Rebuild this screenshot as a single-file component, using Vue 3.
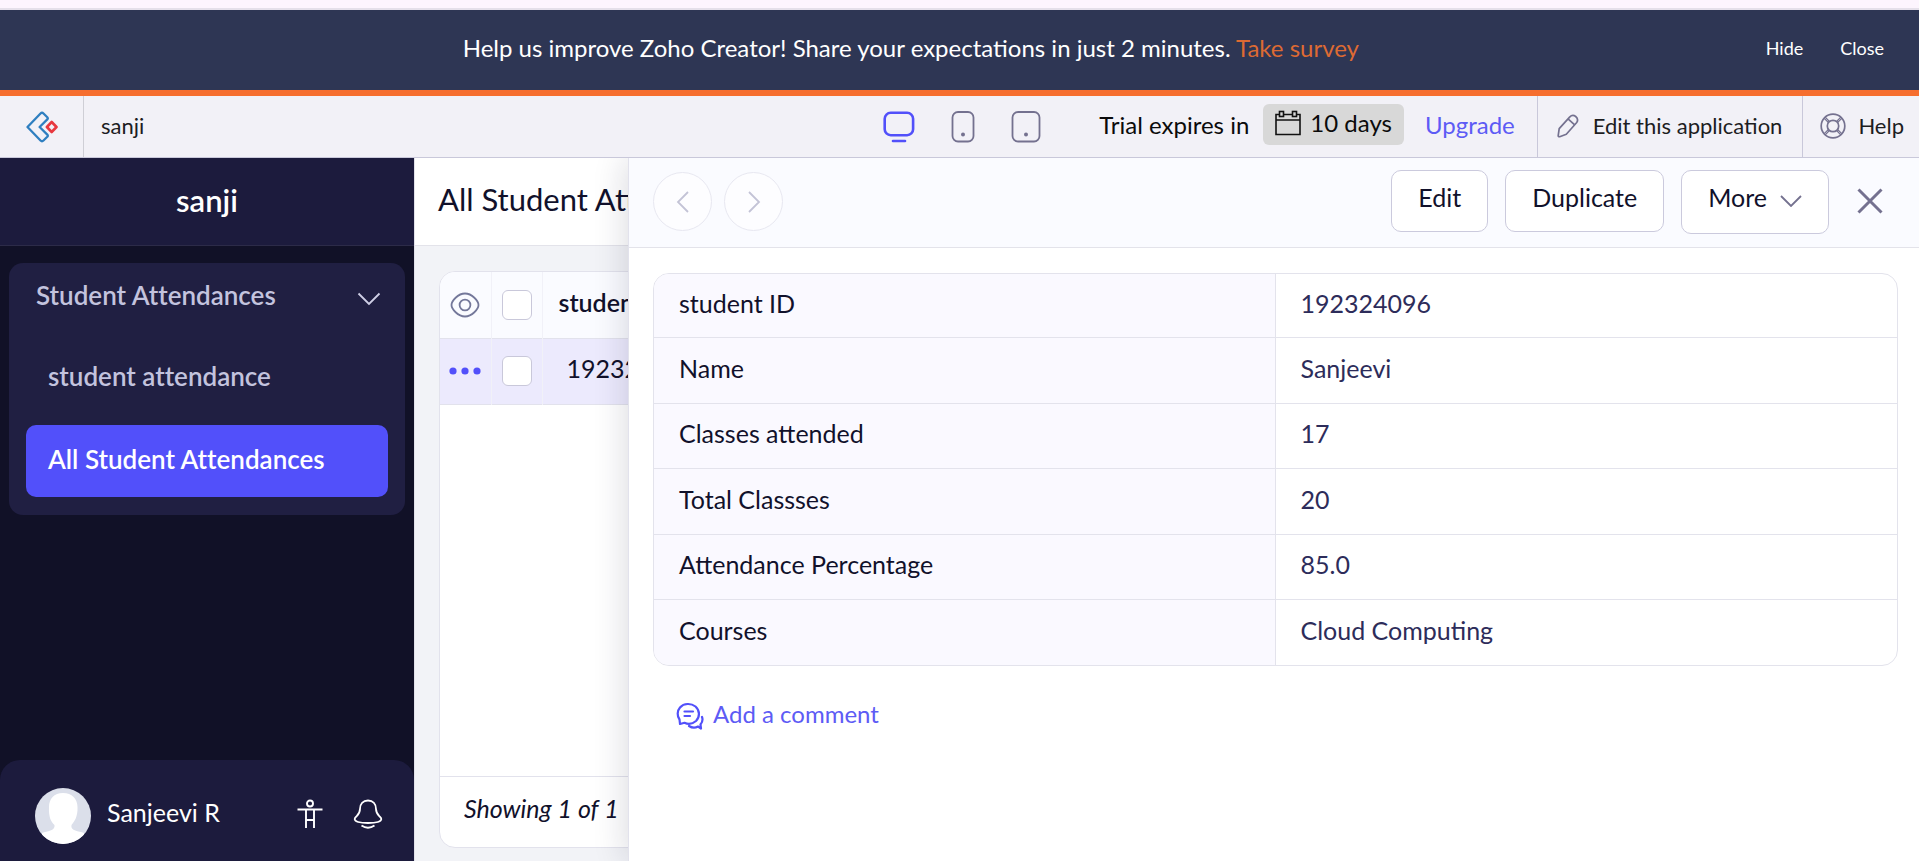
<script setup>
import { ref } from 'vue'

const fields = [
  { label: 'student ID', value: '192324096' },
  { label: 'Name', value: 'Sanjeevi' },
  { label: 'Classes attended', value: '17' },
  { label: 'Total Classses', value: '20' },
  { label: 'Attendance Percentage', value: '85.0' },
  { label: 'Courses', value: 'Cloud Computing' },
]
const allSelected = ref(false)
const rowSelected = ref(false)
</script>

<template>
  <div class="app">
    <div class="strip"></div>
    <aside class="banner" aria-label="Survey">
      <p class="banner-text">
        Help us improve Zoho Creator! Share your expectations in just 2 minutes.
        <a href="#" class="survey">Take survey</a>
      </p>
      <div class="banner-actions">
        <button type="button">Hide</button>
        <button type="button">Close</button>
      </div>
    </aside>

    <header class="topbar">
      <a href="#" class="brand" aria-label="Creator home">
        <svg width="32" height="32" viewBox="0 0 32 32" fill="none" stroke-width="2.300" stroke-linejoin="round">
          <path stroke="#2f7fc0" d="M14.500 2.500Q16 1 17.500 2.500L21.300 6.200Q22.300 7.300 21.300 8.400L13.600 16L21.300 23.600Q22.300 24.700 21.300 25.800L17.500 29.500Q16 31 14.500 29.500L1.500 16Z" />
          <path stroke="#e8383f" stroke-width="2.600" d="M25.700 11L30.500 16L25.700 21L20.900 16Z" />
        </svg>
      </a>
      <span class="app-name">sanji</span>
      <div class="devices">
        <button type="button" aria-label="Desktop">
          <svg width="32" height="32" viewBox="0 0 32 32" fill="none" stroke="#5250fa" stroke-width="2.600" stroke-linecap="round">
            <rect x="1.700" y="1.800" width="28.400" height="22.400" rx="6" />
            <path d="M10 30H22" />
          </svg>
        </button>
        <button type="button" aria-label="Phone">
          <svg width="24" height="32" viewBox="0 0 24 32" fill="none" stroke="#74718f" stroke-width="1.800">
            <rect x="1.500" y="1" width="21" height="29.500" rx="5.500" />
            <circle cx="12" cy="23.500" r="2" fill="#74718f" stroke="none" />
          </svg>
        </button>
        <button type="button" aria-label="Tablet">
          <svg width="30" height="32" viewBox="0 0 30 32" fill="none" stroke="#74718f" stroke-width="1.800">
            <rect x="1.500" y="1" width="27" height="29.500" rx="5.500" />
            <circle cx="15" cy="23.500" r="2" fill="#74718f" stroke="none" />
          </svg>
        </button>
      </div>
      <div class="trial">
        <span>Trial expires in</span>
        <span class="badge">
          <svg width="26" height="26" viewBox="0 0 26 26" fill="none" stroke="#111" stroke-width="1.600">
            <path d="M4 4.500H1V24.500H25V4.500H22M9 4.500H17M1 10H25" />
            <rect x="4.500" y="1.500" width="4" height="5" />
            <rect x="17.500" y="1.500" width="4" height="5" />
          </svg>
          10 days
        </span>
        <a href="#" class="upgrade">Upgrade</a>
      </div>
      <a href="#" class="tool edit-app">
        <svg width="22" height="24" viewBox="0 0 22 24" fill="none" stroke="#74718f" stroke-width="1.700" stroke-linejoin="round">
          <path d="M2.200 14.600L12.600 3.100Q15.500 .2 18.700 2.500Q22 5.300 19.500 8.800L9.300 20.300L2.700 22.700Q1.300 23 1.200 21.600Z" />
          <path d="M11 4.900L17.700 10.800" />
        </svg>
        Edit this application
      </a>
      <a href="#" class="tool help">
        <svg width="26" height="26" viewBox="0 0 26 26" fill="none" stroke="#74718f" stroke-width="1.700">
          <circle cx="13" cy="13" r="11.800" />
          <circle cx="13" cy="13" r="5.700" />
          <path d="M5.200 4.200L9.500 8.500M4.200 5.300L8.400 9.500M20.800 4.200L16.500 8.500M21.800 5.300L17.600 9.500M5.200 21.800L9.500 17.500M4.200 20.700L8.400 16.500M20.800 21.800L16.500 17.500M21.800 20.700L17.600 16.500" stroke-width="1.100" />
        </svg>
        Help
      </a>
    </header>

    <div class="body">
      <nav class="sidebar" aria-label="Application">
        <h1>sanji</h1>
        <div class="group">
          <button type="button" class="group-head">
            Student Attendances
            <svg width="24" height="14" viewBox="0 0 24 14" fill="none" stroke="#cfcfe6" stroke-width="1.800"><path d="M1.500 1.500L12 12L22.500 1.500" /></svg>
          </button>
          <a href="#" class="item">student attendance</a>
          <a href="#" class="item active" aria-current="page">All Student Attendances</a>
        </div>
        <div class="user">
          <svg class="avatar" width="56" height="56" viewBox="0 0 56 56">
            <clipPath id="avatar-clip"><circle cx="28" cy="28" r="28" /></clipPath>
            <g clip-path="url(#avatar-clip)">
              <rect width="56" height="56" fill="#dbdfea" />
              <path fill="#fff" d="M28 5C37 5 42.500 11 42.500 19C43 29 39 34 36.500 37C35 43 44 43 49 45V56H7V45C12 43 20.500 43 19.500 37C16 34 13.500 29 14 19C14 11 19 5 28 5Z" />
            </g>
          </svg>
          <span class="user-name">Sanjeevi R</span>
          <button type="button" aria-label="Accessibility">
            <svg width="26" height="30" viewBox="0 0 26 30" fill="none" stroke="#fff" stroke-width="1.900">
              <circle cx="13" cy="4.500" r="3" />
              <path d="M.5 10.500H25.500M9 10.500V29M17 10.500V29M9 21H17" />
            </svg>
          </button>
          <button type="button" aria-label="Notifications">
            <svg width="30" height="30" viewBox="0 0 30 30" fill="none" stroke="#fff" stroke-width="1.800">
              <path d="M15 1.500C20 1.500 23 5 23 10C23 15 25.500 16 28 19C30 23 22 24 15 24C8 24 0 23 2 19C4.500 16 7 15 7 10C7 5 10 1.500 15 1.500Z" />
              <path d="M8.500 26.500Q15 31 21.500 26.500" />
            </svg>
          </button>
        </div>
      </nav>

      <main class="report">
        <h2>All Student Attendances</h2>
        <div class="card">
          <table class="list">
            <thead>
              <tr>
                <th class="tight">
                  <svg width="30" height="26" viewBox="0 0 30 26" fill="none" stroke="#74789a" stroke-width="1.800">
                    <path d="M15 1.500C22 1.500 28.500 9 28.500 13C28.500 17 22 24.500 15 24.500C8 24.500 1.500 17 1.500 13C1.500 9 8 1.500 15 1.500Z" />
                    <circle cx="15" cy="13" r="5.400" />
                  </svg>
                </th>
                <th class="tight"><input v-model="allSelected" type="checkbox" aria-label="Select all" /></th>
                <th class="data">student ID</th>
              </tr>
            </thead>
            <tbody>
              <tr>
                <td class="tight">
                  <button type="button" aria-label="Record actions">
                    <svg width="32" height="8" viewBox="0 0 32 8" fill="#5250fa"><circle cx="4" cy="4" r="3.600" /><circle cx="16" cy="4" r="3.600" /><circle cx="28" cy="4" r="3.600" /></svg>
                  </button>
                </td>
                <td class="tight"><input v-model="rowSelected" type="checkbox" aria-label="Select record" /></td>
                <td class="data">192324096</td>
              </tr>
            </tbody>
          </table>
          <p class="count">Showing 1 of 1</p>
        </div>
      </main>

      <section class="drawer" aria-label="Record">
        <div class="drawer-head">
          <button type="button" class="round" aria-label="Previous" disabled>
            <svg width="14" height="24" viewBox="0 0 14 24" fill="none" stroke="#c3c3d6" stroke-width="1.800"><path d="M12 2L2 12L12 22" /></svg>
          </button>
          <button type="button" class="round" aria-label="Next" disabled>
            <svg width="14" height="24" viewBox="0 0 14 24" fill="none" stroke="#c3c3d6" stroke-width="1.800"><path d="M2 2L12 12L2 22" /></svg>
          </button>
          <div class="actions">
            <button type="button" class="btn">Edit</button>
            <button type="button" class="btn">Duplicate</button>
            <button type="button" class="btn more">
              More
              <svg width="22" height="12" viewBox="0 0 22 12" fill="none" stroke="#74718f" stroke-width="1.800"><path d="M1 1L11 11L21 1" /></svg>
            </button>
            <button type="button" class="close" aria-label="Close record">
              <svg width="26" height="26" viewBox="0 0 26 26" fill="none" stroke="#74718f" stroke-width="3"><path d="M1.500 1.500L24.500 24.500M24.500 1.500L1.500 24.500" /></svg>
            </button>
          </div>
        </div>
        <table class="record">
          <tbody>
            <tr v-for="f in fields" :key="f.label">
              <th scope="row">{{ f.label }}</th>
              <td>{{ f.value }}</td>
            </tr>
          </tbody>
        </table>
        <button type="button" class="comment">
          <svg width="28" height="28" viewBox="0 0 28 28" fill="none" stroke="#5250fa" stroke-width="2.200" stroke-linejoin="round" stroke-linecap="round">
            <path d="M4 22L3.500 17.500C1 14 1 9 4 5.500C8 1 15 1 19.500 4.500C24 8.500 24 15 20 19C16.500 22 12 22.500 8.500 20.800Z" />
            <path d="M8.500 9.500H17M8.500 14H14" />
            <path d="M13 24C16 26 19.500 26 22 24.500L25 26.500L24.500 22.500C26.500 20 27 17.500 26 15" />
          </svg>
          Add a comment
        </button>
      </section>
    </div>
  </div>
</template>

<style>
html,
body,
#app {
  height: 100%;
}
</style>

<style scoped>
.app {
  display: flex;
  flex-direction: column;
  min-height: 100%;
  overflow: hidden;
  font-family: Lato, "Liberation Sans", sans-serif;
  font-size: 25px;
  line-height: 32px;
  color: #11112b;
}
.app *,
.app *::before {
  box-sizing: border-box;
}
button {
  padding: 0;
  border: 0;
  background: none;
  font: inherit;
  color: inherit;
  display: flex;
  align-items: center;
  justify-content: center;
}
a {
  color: inherit;
  text-decoration: none;
}
svg {
  display: block;
  flex: none;
}
h1,
h2,
p {
  margin: 0;
  font-weight: 400;
}
.strip {
  height: 10px;
  background: #fdf5fe;
  border-bottom: 2px solid #e5e0ea;
}
.banner {
  display: flex;
  align-items: center;
  height: 86px;
  padding: 0 35px 4px 56px;
  background: #2e3654;
  border-bottom: 6px solid #f66e2f;
  color: #fff;
}
.banner-text {
  flex: 1;
  font-size: 24px;
  text-align: center;
}
.survey {
  color: #dd6a33;
}
.banner-actions {
  display: flex;
  gap: 37px;
  font-size: 18px;
}
.topbar {
  display: flex;
  align-items: stretch;
  height: 62px;
  background: #f2f1f7;
  border-bottom: 1px solid #c9c8da;
  color: #1d1d1f;
  font-size: 22px;
}
.brand {
  display: flex;
  align-items: center;
  justify-content: center;
  width: 84px;
  border-right: 1px solid #cfcfd6;
}
.app-name {
  align-self: center;
  flex: 1;
  padding: 0 0 2px 17px;
}
.devices {
  display: flex;
  align-items: center;
  gap: 36px;
  margin-right: 58px;
}
.trial {
  display: flex;
  align-items: center;
  padding-bottom: 3px;
  color: #0b0b0b;
  font-size: 24px;
}
.badge {
  display: flex;
  align-items: center;
  gap: 9px;
  height: 41px;
  margin: 0 21px 2px 14px;
  padding: 0 12px 3px 12px;
  border-radius: 6px;
  background: #d8d8d8;
}
.upgrade {
  padding-right: 22px;
  color: #5d5bf5;
}
.tool {
  display: flex;
  align-items: center;
  gap: 14px;
  padding: 0 20px 2px 19px;
  border-left: 1px solid #c9c8da;
}
.help {
  gap: 12px;
  padding: 0 15px 2px 17px;
}
.body {
  position: relative;
  display: flex;
  flex: 1;
}
.sidebar {
  display: flex;
  flex-direction: column;
  flex: none;
  width: 414px;
  background: #111127;
  color: #fff;
}
.sidebar h1 {
  height: 88px;
  border-bottom: 1px solid #2c2b48;
  background: #1c1b3d;
  font-size: 31px;
  font-weight: 600;
  line-height: 84px;
  text-align: center;
}
.group {
  margin: 17px 9px 0;
  padding: 0 17px 18px;
  border-radius: 14px;
  background: #201f42;
  color: #c3c3de;
  font-size: 26px;
  font-weight: 600;
  font-variant-ligatures: none;
}
.group-head {
  justify-content: space-between;
  width: 100%;
  height: 68px;
  padding: 0 7px 4px 10px;
}
.group-head svg {
  margin-top: 8px;
}
.item {
  display: flex;
  align-items: center;
  height: 72px;
  margin-top: 11px;
  padding: 0 22px 4px;
  border-radius: 10px;
}
.item.active {
  background: #5250fa;
  color: #fff;
}
.user {
  display: flex;
  align-items: center;
  gap: 30px;
  height: 101px;
  margin-top: auto;
  padding: 11px 31px 0 35px;
  border-radius: 20px 20px 0 0;
  background: #1c1b3d;
}
.user-name {
  flex: 1;
  margin-left: -14px;
  padding-bottom: 8px;
}
.user button {
  padding-bottom: 4px;
}
.report {
  display: flex;
  flex-direction: column;
  flex: 1;
  min-width: 0;
  background: #f2f3f7;
  border-left: 1px solid #e2e2ea;
}
.report h2 {
  height: 88px;
  padding-left: 23px;
  border-bottom: 1px solid #e3e3ea;
  background: #fff;
  font-size: 31px;
  line-height: 82px;
}
.card {
  display: flex;
  flex-direction: column;
  flex: 1;
  margin: 25px 24px 13px;
  border: 1px solid #e2e2ec;
  border-radius: 16px;
  background: #fff;
  overflow: hidden;
}
.list {
  width: 100%;
  border-collapse: collapse;
}
.list tr {
  height: 66px;
  border-bottom: 1px solid #e2e2ec;
}
.list th {
  background: #fafbff;
  font-weight: 600;
  text-align: left;
}
.list td {
  background: #eceafd;
}
.list .tight {
  width: 51px;
  padding: 0;
  border-right: 1px solid #f1f1f8;
}
.list .tight > * {
  margin: 0 auto;
}
.list .data {
  padding: 0 16px 6px;
}
.list td.data {
  padding-left: 24px;
}
input[type="checkbox"] {
  display: block;
  width: 30px;
  height: 30px;
  appearance: none;
  border: 1px solid #c9c8da;
  border-radius: 6px;
  background: #fff;
}
.count {
  height: 71px;
  margin-top: auto;
  padding-left: 24px;
  border-top: 1px solid #e2e2ec;
  font-style: italic;
  line-height: 63px;
}
.drawer {
  position: absolute;
  inset: 0 0 0 628px;
  border-left: 1px solid #e2e2ec;
  background: #fff;
  box-shadow: -4px 0 30px rgba(20, 20, 50, 0.14);
  clip-path: inset(0 0 0 -40px);
}
.drawer-head {
  display: flex;
  align-items: center;
  gap: 12px;
  height: 90px;
  padding: 0 36px 2px 24px;
  border-bottom: 1px solid #e3e3ea;
  background: #fafbff;
}
.round {
  width: 59px;
  height: 59px;
  border: 1px solid #e8e8f1;
  border-radius: 50%;
  background: #fdfdff;
}
.actions {
  display: flex;
  align-items: flex-start;
  gap: 17px;
  margin-left: auto;
}
.btn {
  height: 62px;
  padding: 0 26px 8px;
  border: 1px solid #cbcadd;
  border-radius: 10px;
  background: #fff;
}
.more {
  gap: 13px;
  height: 64px;
  padding-bottom: 10px;
}
.more svg {
  margin-top: 8px;
}
.close {
  height: 62px;
  margin-left: 11px;
}
.record {
  width: calc(100% - 45px);
  margin: 25px 21px 0 24px;
  border: 1px solid #e3e3ec;
  border-radius: 16px;
  border-spacing: 0;
  overflow: hidden;
  table-layout: fixed;
}
.record th,
.record td {
  height: 65px;
  padding: 0 25px 6px;
  border-bottom: 1px solid #e3e3ec;
  font-weight: 400;
  text-align: left;
}
.record th {
  border-right: 1px solid #e3e3ec;
  background: #faf9ff;
}
.record td {
  color: #2d2c5a;
}
.record tr:nth-child(even) > * {
  height: 66px;
}
.record tr:first-child > * {
  height: 64px;
}
.record tr:last-child > * {
  height: 65px;
  border-bottom: 0;
}
.comment {
  gap: 9px;
  margin: 32px 0 0 47px;
  color: #5d5bf5;
  font-size: 24px;
}
.comment svg {
  margin-top: 4px;
}
</style>
